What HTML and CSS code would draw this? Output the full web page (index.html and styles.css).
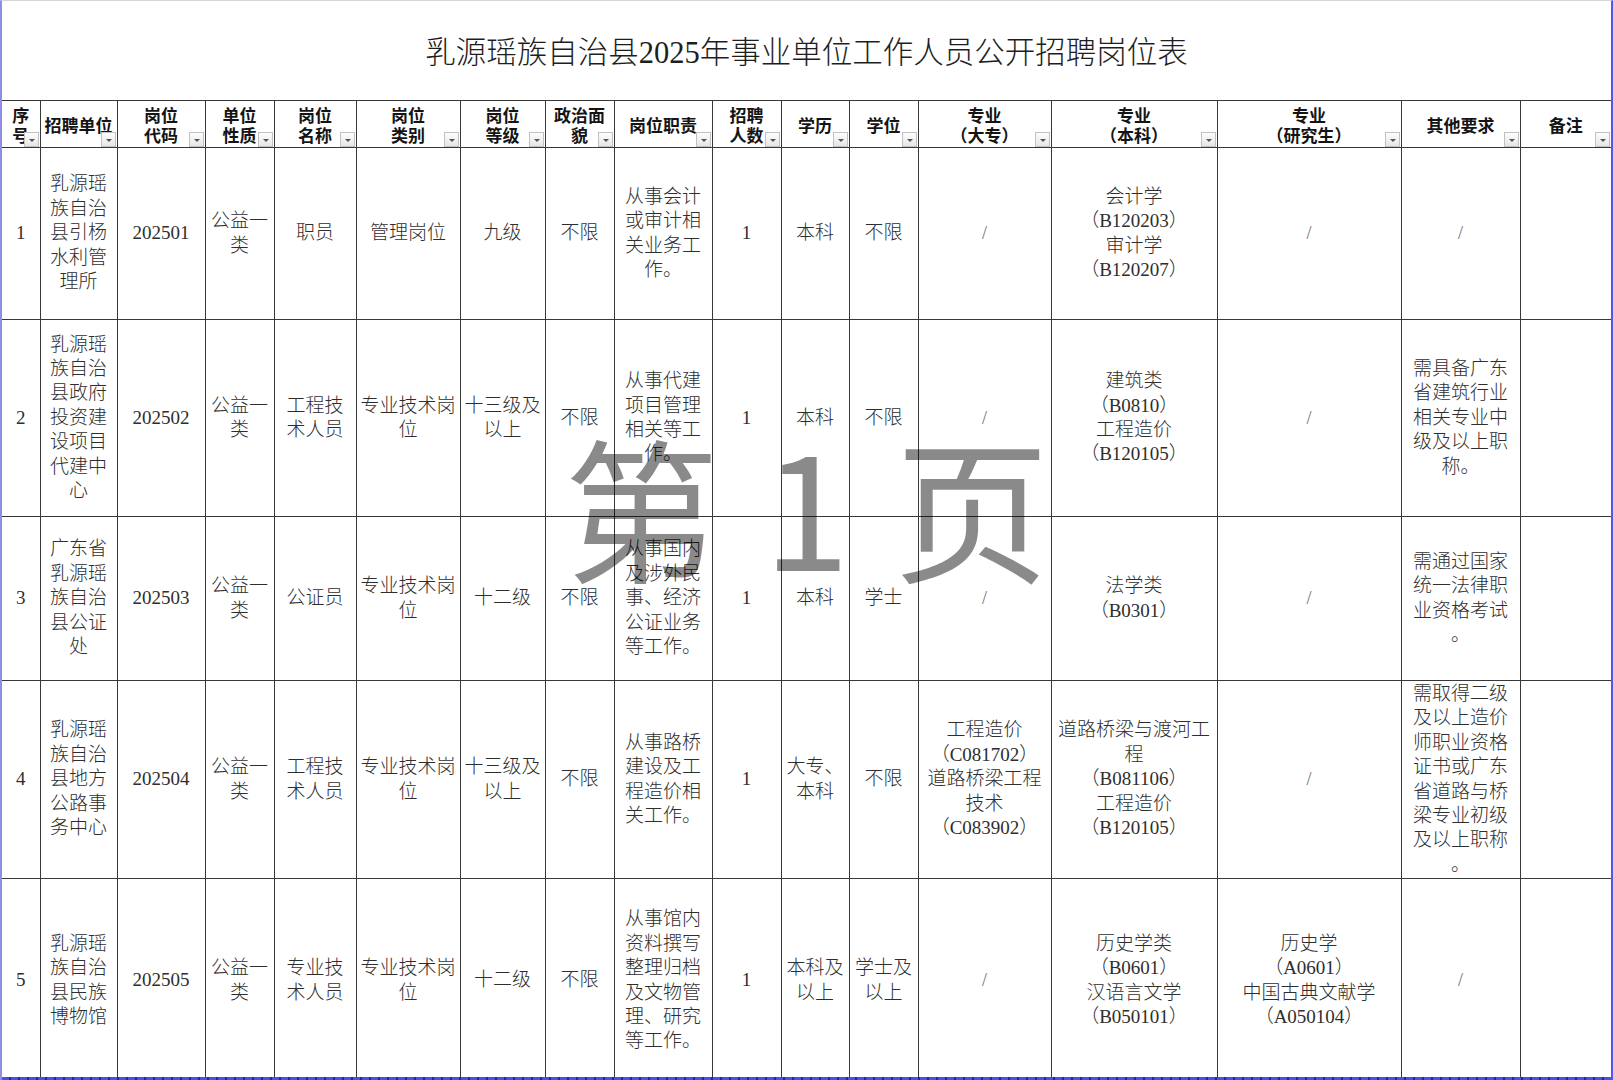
FILE: index.html
```html
<!DOCTYPE html>
<html lang="zh-CN">
<head>
<meta charset="utf-8">
<title>乳源瑶族自治县2025年事业单位工作人员公开招聘岗位表</title>
<link rel="stylesheet" href="styles.css">
</head>
<body>
<div class="sheet">
  <div class="title">乳源瑶族自治县2025年事业单位工作人员公开招聘岗位表</div>
  <table class="grid">
    <colgroup>
      <col class="c1"><col class="c2"><col class="c3"><col class="c4"><col class="c5"><col class="c6"><col class="c7"><col class="c8"><col class="c9"><col class="c10"><col class="c11"><col class="c12"><col class="c13"><col class="c14"><col class="c15"><col class="c16"><col class="c17">
    </colgroup>
    <thead>
      <tr class="rh">
        <th class="first">序<br>号<i class="fb"></i></th>
        <th class="nowrap">招聘单位<i class="fb"></i></th>
        <th>岗位<br>代码<i class="fb"></i></th>
        <th>单位<br>性质<i class="fb"></i></th>
        <th>岗位<br>名称<i class="fb"></i></th>
        <th>岗位<br>类别<i class="fb"></i></th>
        <th>岗位<br>等级<i class="fb"></i></th>
        <th>政治面<br>貌<i class="fb"></i></th>
        <th>岗位职责<i class="fb"></i></th>
        <th>招聘<br>人数<i class="fb"></i></th>
        <th>学历<i class="fb"></i></th>
        <th>学位<i class="fb"></i></th>
        <th>专业<br>（大专）<i class="fb"></i></th>
        <th>专业<br>（本科）<i class="fb"></i></th>
        <th>专业<br>（研究生）<i class="fb"></i></th>
        <th>其他要求<i class="fb"></i></th>
        <th class="last">备注<i class="fb"></i></th>
      </tr>
    </thead>
    <tbody>
      <tr class="r1">
        <td class="first">1</td>
        <td>乳源瑶<br>族自治<br>县引杨<br>水利管<br>理所</td>
        <td>202501</td>
        <td>公益一<br>类</td>
        <td>职员</td>
        <td>管理岗位</td>
        <td>九级</td>
        <td>不限</td>
        <td>从事会计<br>或审计相<br>关业务工<br>作。</td>
        <td>1</td>
        <td>本科</td>
        <td>不限</td>
        <td class="na">/</td>
        <td>会计学<br>（B120203）<br>审计学<br>（B120207）</td>
        <td class="na">/</td>
        <td class="na">/</td>
        <td class="last"></td>
      </tr>
      <tr class="r2">
        <td class="first">2</td>
        <td>乳源瑶<br>族自治<br>县政府<br>投资建<br>设项目<br>代建中<br>心</td>
        <td>202502</td>
        <td>公益一<br>类</td>
        <td>工程技<br>术人员</td>
        <td>专业技术岗<br>位</td>
        <td>十三级及<br>以上</td>
        <td>不限</td>
        <td>从事代建<br>项目管理<br>相关等工<br>作。</td>
        <td>1</td>
        <td>本科</td>
        <td>不限</td>
        <td class="na">/</td>
        <td>建筑类<br>（B0810）<br>工程造价<br>（B120105）</td>
        <td class="na">/</td>
        <td>需具备广东<br>省建筑行业<br>相关专业中<br>级及以上职<br>称。</td>
        <td class="last"></td>
      </tr>
      <tr class="r3">
        <td class="first">3</td>
        <td>广东省<br>乳源瑶<br>族自治<br>县公证<br>处</td>
        <td>202503</td>
        <td>公益一<br>类</td>
        <td>公证员</td>
        <td>专业技术岗<br>位</td>
        <td>十二级</td>
        <td>不限</td>
        <td>从事国内<br>及涉外民<br>事、经济<br>公证业务<br>等工作。</td>
        <td>1</td>
        <td>本科</td>
        <td>学士</td>
        <td class="na">/</td>
        <td>法学类<br>（B0301）</td>
        <td class="na">/</td>
        <td>需通过国家<br>统一法律职<br>业资格考试<br>。</td>
        <td class="last"></td>
      </tr>
      <tr class="r4">
        <td class="first">4</td>
        <td>乳源瑶<br>族自治<br>县地方<br>公路事<br>务中心</td>
        <td>202504</td>
        <td>公益一<br>类</td>
        <td>工程技<br>术人员</td>
        <td>专业技术岗<br>位</td>
        <td>十三级及<br>以上</td>
        <td>不限</td>
        <td>从事路桥<br>建设及工<br>程造价相<br>关工作。</td>
        <td>1</td>
        <td>大专、<br>本科</td>
        <td>不限</td>
        <td>工程造价<br>（C081702）<br>道路桥梁工程<br>技术<br>（C083902）</td>
        <td>道路桥梁与渡河工<br>程<br>（B081106）<br>工程造价<br>（B120105）</td>
        <td class="na">/</td>
        <td>需取得二级<br>及以上造价<br>师职业资格<br>证书或广东<br>省道路与桥<br>梁专业初级<br>及以上职称<br>。</td>
        <td class="last"></td>
      </tr>
      <tr class="r5">
        <td class="first">5</td>
        <td>乳源瑶<br>族自治<br>县民族<br>博物馆</td>
        <td>202505</td>
        <td>公益一<br>类</td>
        <td>专业技<br>术人员</td>
        <td>专业技术岗<br>位</td>
        <td>十二级</td>
        <td>不限</td>
        <td>从事馆内<br>资料撰写<br>整理归档<br>及文物管<br>理、研究<br>等工作。</td>
        <td>1</td>
        <td>本科及<br>以上</td>
        <td>学士及<br>以上</td>
        <td class="na">/</td>
        <td>历史学类<br>（B0601）<br>汉语言文学<br>（B050101）</td>
        <td>历史学<br>（A0601）<br>中国古典文献学<br>（A050104）</td>
        <td class="na">/</td>
        <td class="last"></td>
      </tr>
    </tbody>
  </table>
  <div class="watermark">第 1 页</div>
  <div class="pagebreak"></div>
</div>
</body>
</html>
```

FILE: styles.css
```css
html, body {
  margin: 0;
  padding: 0;
  background: #ffffff;
}

.sheet {
  position: relative;
  width: 1613px;
  height: 1080px;
  overflow: hidden;
  box-sizing: border-box;
  border-top: 1px solid #d6d6d6;
  border-left: 2px solid #8e8ee6;
  border-right: 2px solid #5656ee;
  background: #ffffff;
}

.title {
  height: 99px;
  display: flex;
  align-items: center;
  justify-content: center;
  font-family: "Liberation Serif", "Noto Sans CJK SC", serif;
  font-weight: 300;
  font-size: 30.5px;
  color: #1e1e1e;
  padding-bottom: 2px;
  box-sizing: border-box;
}

.grid {
  width: 1609px;
  table-layout: fixed;
  border-collapse: collapse;
  border-spacing: 0;
}

.c1 { width: 38px; }
.c2 { width: 77px; }
.c3 { width: 88px; }
.c4 { width: 69px; }
.c5 { width: 82px; }
.c6 { width: 104px; }
.c7 { width: 85px; }
.c8 { width: 69px; }
.c9 { width: 98px; }
.c10 { width: 69px; }
.c11 { width: 68px; }
.c12 { width: 69px; }
.c13 { width: 133px; }
.c14 { width: 166px; }
.c15 { width: 184px; }
.c16 { width: 119px; }
.c17 { width: 91px; }

.grid th,
.grid td {
  border: 1px solid #383838;
  padding: 0;
  text-align: center;
  vertical-align: middle;
  white-space: nowrap;
  overflow: visible;
}

.grid th.first,
.grid td.first {
  border-left: none;
}

.grid th.last,
.grid td.last {
  border-right: none;
}

.grid th {
  position: relative;
  font-family: "Noto Sans CJK SC", sans-serif;
  font-weight: 700;
  font-size: 17px;
  line-height: 20px;
  color: #141414;
  padding-top: 2px;
}

.grid td {
  font-family: "Liberation Serif", "Noto Sans CJK SC", serif;
  font-weight: 300;
  font-size: 19px;
  line-height: 24.4px;
  color: #2e2e2e;
}

.grid td.na {
  color: #707070;
  font-size: 18px;
}

.rh { height: 47px; }
.r1 { height: 172px; }
.r2 { height: 197px; }
.r3 { height: 164px; }
.r4 { height: 198px; }
.r5 { height: 204px; }

/* Excel autofilter dropdown button */
.fb {
  position: absolute;
  right: 1px;
  bottom: 0;
  width: 15px;
  height: 15px;
  box-sizing: border-box;
  border: 1px solid #c2c2c2;
  background: linear-gradient(#fdfdfd, #e6e6e6);
}

.fb::after {
  content: "";
  position: absolute;
  left: 4px;
  top: 6px;
  border-left: 3px solid transparent;
  border-right: 3px solid transparent;
  border-top: 3px solid #555555;
}

.watermark {
  position: absolute;
  left: 0;
  right: 0;
  top: 425px;
  text-align: center;
  white-space: pre;
  font-family: "Noto Sans CJK SC", sans-serif;
  font-weight: 400;
  font-size: 155px;
  line-height: 1;
  word-spacing: 10px;
  color: rgba(0, 0, 0, 0.46);
  pointer-events: none;
}

.pagebreak {
  position: absolute;
  left: 0;
  right: 0;
  top: 1076px;
  height: 3px;
  background: repeating-linear-gradient(90deg, #4c4cf2 0 7px, #2a2a80 7px 9px);
}
```
